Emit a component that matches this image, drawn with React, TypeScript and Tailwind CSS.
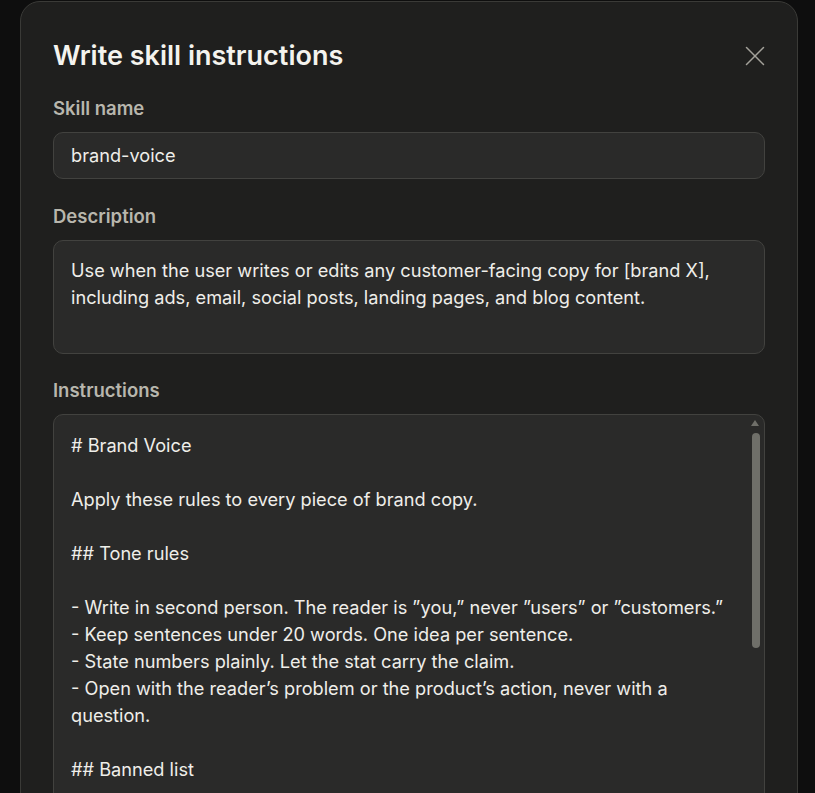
import { X } from "lucide-react";

const instructionLines = [
  "# Brand Voice",
  "",
  "Apply these rules to every piece of brand copy.",
  "",
  "## Tone rules",
  "",
  "- Write in second person. The reader is \u201Dyou,\u201D never \u201Dusers\u201D or \u201Dcustomers.\u201D",
  "- Keep sentences under 20 words. One idea per sentence.",
  "- State numbers plainly. Let the stat carry the claim.",
  "- Open with the reader\u2019s problem or the product\u2019s action, never with a",
  "question.",
  "",
  "## Banned list",
];

function Label({ children }: { children: React.ReactNode }) {
  return (
    <div className="text-[18.5px] leading-6 font-semibold text-[#b8b6ad]">{children}</div>
  );
}

export default function App() {
  return (
    <div
      className="w-[815px] h-[793px] overflow-hidden bg-[#0e0e0e] pl-[20px] pt-[1px]"
      style={{ fontFamily: "Inter, 'Noto Sans', sans-serif" }}
    >
      <div className="w-[778px] h-[900px] rounded-[20px] border border-[#3a3a37] bg-[#1f1f1e] px-[32px] pt-[38px]">
        <div className="flex items-center justify-between h-[32px]">
          <h2 className="text-[27px] leading-8 font-semibold text-[#f4f3ee]">
            Write skill instructions
          </h2>
          <X className="w-[34px] h-[34px] text-[#a3a19a] mr-[-7px]" strokeWidth={1.05} />
        </div>

        <div className="mt-[24px] flex flex-col gap-3">
          <Label>Skill name</Label>
          <div className="h-[47px] rounded-[10px] border border-[#42423f] bg-[#2a2a29] flex items-center px-[17px] text-[18.2px] text-[#efeee9]">
            brand-voice
          </div>
        </div>

        <div className="mt-[25px] flex flex-col gap-3">
          <Label>Description</Label>
          <div className="h-[114px] rounded-[10px] border border-[#42423f] bg-[#2a2a29] px-[17px] pt-[16px] text-[18.2px] leading-[27px] text-[#efeee9]">
            Use when the user writes or edits any customer-facing copy for [brand X],
            including ads, email, social posts, landing pages, and blog content.
          </div>
        </div>

        <div className="mt-[24px] flex flex-col gap-3">
          <Label>Instructions</Label>
          <div className="relative h-[420px] rounded-[10px] border border-[#42423f] bg-[#2a2a29] px-[17px] pt-[17px] text-[18.2px] leading-[27px] text-[#efeee9] overflow-hidden">
            {instructionLines.map((line, i) => (
              <div key={i} className="h-[27px] whitespace-pre">
                {line}
              </div>
            ))}
            <div className="absolute right-[5px] top-[5px] w-0 h-0 border-l-[4px] border-r-[4px] border-b-[6px] border-l-transparent border-r-transparent border-b-[#6f6f69]" />
            <div className="absolute right-[4px] top-[18px] w-[8px] h-[215px] rounded-full bg-[#6f6f69]" />
          </div>
        </div>
      </div>
    </div>
  );
}
